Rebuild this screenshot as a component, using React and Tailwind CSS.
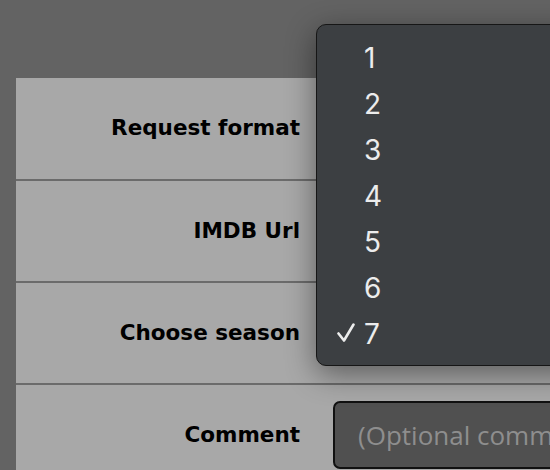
import React from "react"

const seasons = ["1", "2", "3", "4", "5", "6", "7"]

const Fila = ({ label, children, first }) => (
  <div className={`flex items-center border-b-2 border-[#6b6b6b] ${first ? "h-[103px]" : "h-[102px]"}`}>
    <div className="w-[284px] text-right font-['DejaVu_Sans',sans-serif] font-bold text-[21.5px] text-black">
      {label}
    </div>
    <div className="ml-[33px] flex-1">{children}</div>
  </div>
)

const App = () => {
  const selected = "7"

  return (
    <div className="relative w-[550px] h-[470px] overflow-hidden bg-[#636363]">
      <div className="pt-[78px] pl-4">
        <div className="w-[620px] bg-[#a8a8a8]">
          <Fila label="Request format" first />
          <Fila label="IMDB Url" />
          <Fila label="Choose season" />
          <Fila label="Comment">
            <div className="h-[68px] rounded-[7px] border-2 border-[#111] bg-[#505050] flex items-center pl-[23px] font-['Open_Sans',sans-serif] text-[26px] text-[#8e8e8e] whitespace-nowrap">
              (Optional comment)
            </div>
          </Fila>
        </div>
      </div>

      {/* menu desplegable de temporadas */}
      <div className="absolute left-[316px] top-[24px] w-[300px] h-[342px] rounded-[10px] border border-[#161616] bg-[#3c3f42] shadow-[0_8px_30px_rgba(0,0,0,0.45)] pt-[10px]">
        {seasons.map(s => (
          <div key={s} className="relative h-[46px] flex items-center pl-[47px] font-['Inter',sans-serif] text-[28px] text-[#ececec]">
            {s === selected && (
              <svg className="absolute left-[20px] top-[12px]" width="18" height="20" viewBox="0 0 18 20">
                <polyline points="1.5,10.5 7,17.5 16.5,1.5" fill="none" stroke="#ececec" strokeWidth="2.6" strokeLinecap="round" strokeLinejoin="round" />
              </svg>
            )}
            {s}
          </div>
        ))}
      </div>
    </div>
  )
}

export default App
